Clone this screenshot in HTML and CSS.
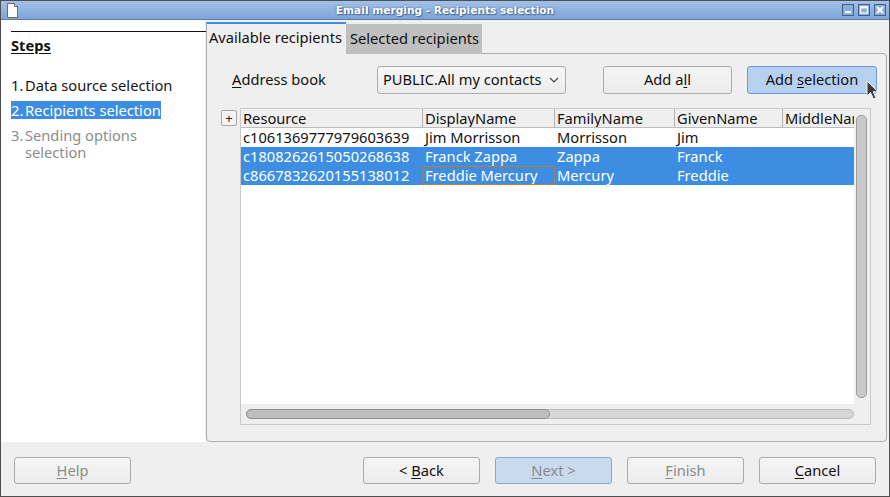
FILE: index.html
```html
<!DOCTYPE html>
<html>
<head>
<meta charset="utf-8">
<title>Email merging - Recipients selection</title>
<link rel="stylesheet" href="styles.css">
</head>
<body>
<div class="window">
  <div class="titlebar">
    <svg class="appicon" width="11" height="15" viewBox="0 0 11 15">
      <path d="M0.5 0.5 H7.5 L10.5 3.5 V14.5 H0.5 Z" fill="#fbfbfb" stroke="#6b6b6b"/>
      <path d="M7.5 0.5 V3.5 H10.5" fill="#dcdcdc" stroke="#6b6b6b"/>
    </svg>
    <div class="title">Email merging - Recipients selection</div>
    <div class="wm-buttons">
      <div class="wm-btn"><svg width="10" height="10" viewBox="0 0 10 10"><rect x="2" y="6" width="6" height="2" fill="#fff"/></svg></div>
      <div class="wm-btn"><svg width="10" height="10" viewBox="0 0 10 10"><rect x="1.5" y="2" width="7" height="6" fill="none" stroke="#fff" stroke-width="1.2"/><rect x="1" y="1.5" width="8" height="2" fill="#fff"/></svg></div>
      <div class="wm-btn"><svg width="10" height="10" viewBox="0 0 10 10"><path d="M2 2 L8 8 M8 2 L2 8" stroke="#fff" stroke-width="2"/></svg></div>
    </div>
  </div>

  <div class="main">
    <aside class="steps">
      <div class="steps-rule"></div>
      <div class="steps-title">Steps</div>
      <ul class="step-list">
        <li class="step"><span class="num">1.</span><span class="txt">Data source selection</span></li>
        <li class="step current"><span class="num">2.</span><span class="txt">Recipients selection</span></li>
        <li class="step disabled"><span class="num">3.</span><span class="txt">Sending options selection</span></li>
      </ul>
    </aside>

    <section class="content">
      <div class="tabs">
        <div class="tab active">Available recipients</div>
        <div class="tab inactive">Selected recipients</div>
      </div>
      <div class="panel">
        <div class="toolbar">
          <div class="label"><u>A</u>ddress book</div>
          <div class="combo">
            <span>PUBLIC.All my contacts</span>
            <svg class="chev" width="10" height="6" viewBox="0 0 10 6"><path d="M1 1 L5 5 L9 1" fill="none" stroke="#444" stroke-width="1.1"/></svg>
          </div>
          <div class="btn addall"><span>Add a<u>l</u>l</span></div>
          <div class="btn default addsel"><span>Add <u>s</u>election</span></div>
        </div>

        <div class="table-area">
          <div class="expander">+</div>
          <div class="grid">
            <div class="grid-data">
              <div class="row header">
                <div class="cell c1">Resource</div>
                <div class="cell c2">DisplayName</div>
                <div class="cell c3">FamilyName</div>
                <div class="cell c4">GivenName</div>
                <div class="cell c5">MiddleName</div>
              </div>
              <div class="row">
                <div class="cell c1">c1061369777979603639</div>
                <div class="cell c2">Jim Morrisson</div>
                <div class="cell c3">Morrisson</div>
                <div class="cell c4">Jim</div>
                <div class="cell c5"></div>
              </div>
              <div class="row selected">
                <div class="cell c1">c1808262615050268638</div>
                <div class="cell c2">Franck Zappa</div>
                <div class="cell c3">Zappa</div>
                <div class="cell c4">Franck</div>
                <div class="cell c5"></div>
              </div>
              <div class="row selected">
                <div class="cell c1">c8667832620155138012</div>
                <div class="cell c2 focus">Freddie Mercury</div>
                <div class="cell c3">Mercury</div>
                <div class="cell c4">Freddie</div>
                <div class="cell c5"></div>
              </div>
            </div>
            <div class="vscroll"><div class="vthumb"></div></div>
            <div class="hscroll"><div class="htrough"><div class="hthumb"></div></div></div>
            <div class="corner"></div>
          </div>
        </div>
      </div>
    </section>
  </div>

  <div class="footer">
    <div class="btn disabled"><span><u>H</u>elp</span></div>
    <div class="spacer"></div>
    <div class="btn"><span>&lt; <u>B</u>ack</span></div>
    <div class="btn default disabled"><span><u>N</u>ext &gt;</span></div>
    <div class="btn disabled"><span><u>F</u>inish</span></div>
    <div class="btn"><span><u>C</u>ancel</span></div>
  </div>

  <svg class="cursor" width="14" height="20" viewBox="0 0 14 20">
    <path d="M1 1 L1 16 L4.5 12.5 L7.5 19 L10 18 L7.2 11.7 L12 11.7 Z" fill="#3a3a3a" stroke="#f2f2f2" stroke-width="1" stroke-linejoin="round"/>
  </svg>
</div>
</body>
</html>
```

FILE: styles.css
```css
* { box-sizing: border-box; }
html, body { margin: 0; padding: 0; }
body {
  width: 890px;
  height: 497px;
  overflow: hidden;
  background: #efefef;
  font-family: "Noto Sans", "Open Sans", sans-serif;
  font-size: 14.67px;
  color: #1b1b1b;
}
u { text-decoration: underline; text-underline-offset: 2px; text-decoration-thickness: 1px; }

.window {
  position: relative;
  width: 890px;
  height: 497px;
  border: 1px solid #4f4f4f;
  display: flex;
  flex-direction: column;
  background: #efefef;
}

/* title bar */
.titlebar {
  height: 19px;
  flex: none;
  background: linear-gradient(#a2c1e8, #7ea5d7);
  border-bottom: 1px solid #5b7bab;
  display: flex;
  align-items: center;
  position: relative;
}
.appicon { margin-left: 6px; flex: none; }
.title {
  position: absolute;
  left: 0; right: 0; top: 0;
  text-align: center;
  font-family: "DejaVu Sans", sans-serif;
  font-weight: bold;
  font-size: 10.6px;
  line-height: 18px;
  color: #ffffff;
  text-shadow: 0 0 2px #3f5f8c, 1px 1px 1px #4a6a99;
}
.wm-buttons {
  margin-left: auto;
  margin-right: 3px;
  display: flex;
  gap: 4px;
  position: relative;
}
.wm-btn {
  width: 12px;
  height: 12px;
  border: 1px solid #3f5e8c;
  background: #8aaedd;
  display: flex;
  align-items: center;
  justify-content: center;
}
.wm-btn svg { display: block; }

/* main */
.main {
  height: 422px;
  flex: none;
  display: flex;
}
.steps {
  width: 204px;
  flex: none;
  background: #ffffff;
  padding: 11px 0 0 10px;
}
.steps-rule { border-top: 1px solid #111; margin-right: -1px; }
.steps-title {
  margin-top: 4px;
  font-weight: bold;
  line-height: 18px;
  text-decoration: underline;
  text-underline-offset: 2px;
  color: #111;
}
.step-list { list-style: none; margin: 22px 0 0 0; padding: 0; }
.step {
  display: flex;
  width: fit-content;
  line-height: 18px;
  margin-bottom: 7px;
  color: #151515;
}
.step .num { width: 14px; flex: none; }
.step .txt { max-width: 156px; }
.step.current { background: #3d8ee3; color: #ffffff; }
.step.disabled { color: #8c8c8c; line-height: 17px; padding-top: 1px; }

/* content */
.content {
  flex: 1;
  display: flex;
  flex-direction: column;
  padding: 2px 2px 0 1px;
  min-width: 0;
}
.tabs {
  display: flex;
  align-items: flex-end;
  height: 32px;
  margin-bottom: -1px;
  position: relative;
  z-index: 1;
  flex: none;
}
.tab {
  display: flex;
  align-items: center;
  white-space: nowrap;
}
.tab.active {
  width: 140px;
  height: 32px;
  border-top: 2px solid #3d8ee3;
  border-left: 1px solid #acacac;
  background: #efefef;
  padding: 0 0 4px 2px;
  color: #111;
}
.tab.inactive {
  width: 136px;
  height: 30px;
  background: #bfbfbf;
  padding: 0 0 3px 4px;
  color: #111;
}
.panel {
  flex: 1;
  border: 1px solid #aeaeae;
  border-radius: 0 4px 4px 4px;
  background: #efefef;
  display: flex;
  flex-direction: column;
  padding-top: 11px;
  min-height: 0;
}
.toolbar {
  display: flex;
  align-items: center;
  height: 29px;
  padding-left: 25px;
  flex: none;
}
.label { width: 145px; flex: none; color: #111; padding-bottom: 1px; }
.combo {
  width: 189px;
  height: 28px;
  flex: none;
  border: 1px solid #acacac;
  border-radius: 3px;
  background: linear-gradient(#f7f7f7, #ececec);
  display: flex;
  align-items: center;
  padding: 0 6px 1px 5px;
  color: #111;
}
.combo span { flex: 1; white-space: nowrap; }
.chev { flex: none; margin-top: 1px; }

.btn {
  width: 117px;
  height: 27px;
  flex: none;
  border: 1px solid #ababab;
  border-radius: 3px;
  background: linear-gradient(#f5f5f5, #ececec);
  display: flex;
  align-items: center;
  justify-content: center;
  color: #111;
  white-space: nowrap;
  padding-bottom: 1px;
}
.btn.default { background: #b6d0f0; border-color: #6c9bd6; }
.btn.disabled { color: #8a8a8a; }
.btn.default.disabled { background: #c9daee; border-color: #84a8d6; }
.addall { width: 129px; height: 28px; margin-left: 37px; }
.addsel { width: 130px; height: 28px; margin-left: 15px; }

/* table */
.table-area {
  flex: 1;
  display: flex;
  margin-top: 14px;
  padding: 0 15px 16px 14px;
  min-height: 0;
}
.expander {
  width: 16px;
  height: 16px;
  margin-top: 2px;
  margin-right: 3px;
  flex: none;
  border: 1px solid #a8a8a8;
  border-radius: 2px;
  background: #f4f4f4;
  display: flex;
  align-items: center;
  justify-content: center;
  font-size: 13px;
  line-height: 1;
  color: #222;
}
.grid {
  flex: 1;
  border: 1px solid #c9c9c9;
  display: grid;
  grid-template-columns: 1fr 16px;
  grid-template-rows: 1fr 20px;
  min-width: 0;
}
.grid-data {
  background: #ffffff;
  overflow: hidden;
  min-width: 0;
}
.row {
  display: flex;
  height: 19px;
  line-height: 19px;
  color: #111;
  white-space: nowrap;
}
.row.header {
  background: #efefef;
  border-bottom: 1px solid #bdbdbd;
}
.cell {
  flex: none;
  padding-left: 2px;
  overflow: hidden;
  border-right: 1px solid transparent;
}
.row.header .cell { border-right-color: #b3b3b3; }
.c1 { width: 182px; }
.c2 { width: 132px; }
.c3 { width: 120px; }
.c4 { width: 108px; }
.c5 { width: 72px; border-right: none !important; }
.row.selected { background: #3d8ee3; color: #ffffff; }
.cell.focus {
  margin-left: -1px;
  width: 133px;
  padding-left: 2px;
  line-height: 17px;
  border: 1px dotted #d0822e;
}

.vscroll {
  background: #efefef;
  padding: 6px 0 6px 2px;
}
.vthumb {
  width: 11px;
  height: 100%;
  border: 1px solid #9c9c9c;
  border-radius: 5px;
  background: #c9c9c9;
}
.hscroll {
  background: #efefef;
  padding: 5px 0 0 5px;
}
.htrough {
  height: 10px;
  border: 1px solid #bababa;
  border-radius: 5px;
  background: #d6d6d6;
}
.hthumb {
  width: 304px;
  height: 10px;
  margin: -1px 0 0 -1px;
  border: 1px solid #8e8e8e;
  border-radius: 5px;
  background: #bfbfbf;
}
.corner { background: #efefef; }

/* footer */
.footer {
  height: 54px;
  flex: none;
  display: flex;
  align-items: flex-start;
  padding: 15px 13px 0 13px;
  gap: 15px;
}
.spacer { flex: 1; }

.cursor {
  position: absolute;
  left: 865px;
  top: 79px;
}
```
